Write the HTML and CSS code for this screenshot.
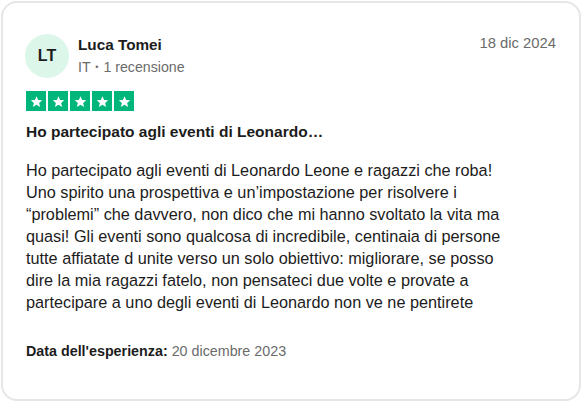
FILE: index.html
```html
<!DOCTYPE html>
<html lang="it">
<head>
<meta charset="utf-8">
<link rel="stylesheet" href="styles.css">
</head>
<body>
<article class="card">
  <header class="head">
    <div class="avatar">LT</div>
    <div class="who">
      <div class="name">Luca Tomei</div>
      <div class="meta">IT <span class="dot">•</span> 1 recensione</div>
    </div>
    <time class="date">18 dic 2024</time>
  </header>
  <div class="stars">
    <span class="star"><svg viewBox="0 0 24 24"><path d="M12 3.5l2.6 6.1 6.6.5-5 4.3 1.6 6.4L12 17.3l-5.8 3.5 1.6-6.4-5-4.3 6.6-.5z"/></svg></span>
    <span class="star"><svg viewBox="0 0 24 24"><path d="M12 3.5l2.6 6.1 6.6.5-5 4.3 1.6 6.4L12 17.3l-5.8 3.5 1.6-6.4-5-4.3 6.6-.5z"/></svg></span>
    <span class="star"><svg viewBox="0 0 24 24"><path d="M12 3.5l2.6 6.1 6.6.5-5 4.3 1.6 6.4L12 17.3l-5.8 3.5 1.6-6.4-5-4.3 6.6-.5z"/></svg></span>
    <span class="star"><svg viewBox="0 0 24 24"><path d="M12 3.5l2.6 6.1 6.6.5-5 4.3 1.6 6.4L12 17.3l-5.8 3.5 1.6-6.4-5-4.3 6.6-.5z"/></svg></span>
    <span class="star"><svg viewBox="0 0 24 24"><path d="M12 3.5l2.6 6.1 6.6.5-5 4.3 1.6 6.4L12 17.3l-5.8 3.5 1.6-6.4-5-4.3 6.6-.5z"/></svg></span>
  </div>
  <h2 class="title">Ho partecipato agli eventi di Leonardo…</h2>
  <p class="body">Ho partecipato agli eventi di Leonardo Leone e ragazzi che roba! Uno spirito una prospettiva e un’impostazione per risolvere i “problemi” che davvero, non dico che mi hanno svoltato la vita ma quasi! Gli eventi sono qualcosa di incredibile, centinaia di persone tutte affiatate d unite verso un solo obiettivo: migliorare, se posso dire la mia ragazzi fatelo, non pensateci due volte e provate a partecipare a uno degli eventi di Leonardo non ve ne pentirete</p>
  <p class="exp"><b>Data dell'esperienza:</b> 20 dicembre 2023</p>
</article>
</body>
</html>
```

FILE: styles.css
```css
html, body {
  margin: 0;
  padding: 0;
  background: #ffffff;
}
body {
  font-family: "Liberation Sans", Arial, sans-serif;
  color: #1c1c1c;
}
.card {
  box-sizing: border-box;
  margin: 1px;
  width: 580px;
  height: 400px;
  border: 2px solid #e6e6e6;
  border-radius: 16px;
  background: #fff;
  padding: 31px 23px 0 23px;
}
.head {
  display: flex;
  align-items: flex-start;
}
.avatar {
  width: 44px;
  height: 44px;
  border-radius: 50%;
  background: #dcf7ea;
  display: flex;
  align-items: center;
  justify-content: center;
  font-weight: bold;
  font-size: 16px;
  color: #1c1c1c;
  flex: none;
  margin-left: -1px;
}
.who {
  margin-left: 9px;
  margin-top: 1px;
  flex: 1;
}
.name {
  font-weight: bold;
  font-size: 15.3px;
  line-height: 20px;
}
.meta {
  font-size: 14.2px;
  color: #6b6b6b;
  line-height: 20px;
  margin-top: 2px;
}
.dot {
  font-size: 9px;
  vertical-align: 2px;
  margin: 0 1px;
}
.date {
  font-size: 14.8px;
  color: #6b6b6b;
  line-height: 20px;
  margin-top: -1px;
}
.stars {
  display: flex;
  gap: 2px;
  margin-top: 13px;
}
.star {
  width: 20px;
  height: 20px;
  background: #00b67a;
  display: flex;
  align-items: center;
  justify-content: center;
}
.star svg {
  width: 15px;
  height: 15px;
  fill: #fff;
}
.title {
  font-size: 15.5px;
  font-weight: bold;
  line-height: 20px;
  margin: 11px 0 0;
}
.body {
  font-size: 16.25px;
  line-height: 22px;
  margin: 17px 0 0;
  padding-right: 40px;
  color: #1c1c1c;
}
.exp {
  font-size: 14.3px;
  line-height: 20px;
  margin: 28px 0 0;
  color: #6b6b6b;
}
.exp b {
  color: #1c1c1c;
}
```
